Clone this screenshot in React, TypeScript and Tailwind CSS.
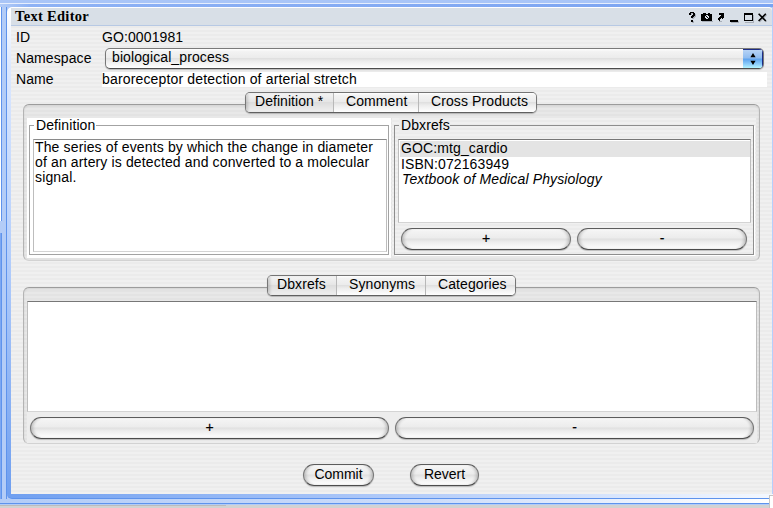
import React from "react";

const STRIPES =
  "bg-[repeating-linear-gradient(180deg,#f0f0f0_0px,#f0f0f0_2px,#ebebeb_2px,#ebebeb_4px)]";
const GLOSS =
  "bg-[linear-gradient(180deg,#ffffff_0%,#f3f3f3_12%,#ececec_45%,#e0e0e0_50%,#ededed_65%,#ffffff_100%)]";

function Pill({ label, className, textClass = "" }: { label: string; className: string; textClass?: string }) {
  return (
    <button
      className={`flex h-[22px] shrink-0 items-center justify-center rounded-full border border-t-[#5c5c5c] border-x-[#777] border-b-[#4c4c4c] shadow-[0_1px_1px_#00000038,inset_3px_0_3px_-1px_#00000030,inset_-3px_0_3px_-1px_#00000030] ${GLOSS} ${className}`}
    >
      <span className={`relative -top-px whitespace-nowrap ${textClass}`}>{label}</span>
    </button>
  );
}

function Tabs({ items, className }: { items: { label: string; className: string }[]; className: string }) {
  return (
    <div
      className={`relative z-10 flex h-[21px] overflow-hidden rounded-[5px] border border-t-[#747474] border-x-[#777] border-b-[#606060] shadow-[0_1px_1px_#00000038] ${className}`}
    >
      {items.map((t, i) => (
        <div
          key={t.label}
          className={`flex h-full shrink-0 items-center whitespace-nowrap ${
            i === 0
              ? "bg-[linear-gradient(180deg,#f4f4f4_0%,#e6e6e6_45%,#dddddd_50%,#f0f0f0_100%)] shadow-[inset_3px_0_3px_-1px_#00000028]"
              : `border-l border-[#b8b8b8] ${GLOSS}`
          } ${t.className}`}
        >
          <span className="relative -top-px">{t.label}</span>
        </div>
      ))}
    </div>
  );
}

function WindowIcons() {
  return (
    <svg width="80" height="12" viewBox="0 0 80 12" className="mt-[4px] shrink-0" shapeRendering="crispEdges" fill="#000">
      <g fill="#a9afb9" transform="translate(1 1)">
        <path d="M2 0h4v1h1v3H6v1H5v1H3V4h1V1H3v1H1V1h1zM3 8h2v2H3zM13 8h11v1H13zM30 8h3v1h-3zM42 8h8v2h-8zM56 9h9v1h-9zM64 2h1v7h-1z" />
      </g>
      <path d="M2 0h4v1h1v3H6v1H5v1H3V4h1V3h1V1H3v2H1V1h1zM3 8h2v2H3z" />
      <path d="M13 2h2V1h3v1h2V1h2v1h2v7H13z" />
      <path d="M17 4h1v-1h2v1h1v2h-1v1h-2V6h-1z" fill="#d8dfe7" />
      <path d="M18 4h1v1h-1zM19 5h1v1h-1z" />
      <path d="M31 1h5v5h-1v1h-1V6h-1v1h-1v2h-1V8h-1V6h1V5h1V4h1V3h-2z" />
      <path d="M42 8h8v2h-8z" />
      <path d="M56 1h9v8h-9zM57 3v5h7V3z" fillRule="evenodd" />
      <g shapeRendering="auto" fill="none" strokeWidth="1.6">
        <path d="M71.5 2.7l7 7m0-7l-7 7" stroke="#a9afb9" />
        <path d="M70.6 1.8l7.2 7.2m0-7.2l-7.2 7.2" stroke="#000" />
      </g>
    </svg>
  );
}

function Row({ label, children, className }: { label: string; children: React.ReactNode; className: string }) {
  return (
    <div className={`flex items-center ${className}`}>
      <div className="w-[86px] shrink-0 whitespace-nowrap tracking-[0.1px]">{label}</div>
      {children}
    </div>
  );
}

export default function App() {
  return (
    <div className="flex h-[508px] w-[773px] flex-col overflow-hidden bg-[#b3ccf7] font-['Liberation_Sans',Arial,sans-serif] text-[14px] leading-[15px] text-black">
      <div className="h-[3px] shrink-0 bg-[#a9c5f7]" />
      <div className="h-px shrink-0 bg-[#e6eefe]" />
      <div className="h-[3px] shrink-0 bg-[linear-gradient(90deg,#b3ccf7_0px,#8eb2f5_30px,#7aa3f1_100%)]" />

      <div className="flex h-[492px] shrink-0">
        {/* Edges of the neighbouring panes */}
        <div className="flex w-[7px] shrink-0 border-r border-[#5e93ec]">
          <div className="flex w-[2px] flex-col">
            <div className="h-[214px] border-r border-[#5e93ec] bg-white" />
            <div className="h-3 bg-[#b3ccf7]" />
            <div className="flex-1 border-r border-[#5e93ec] bg-[#7da8f2]" />
          </div>
          <div className="flex-1 bg-[#b3ccf7]" />
        </div>

        <div className="flex h-[492px] w-[766px] flex-col rounded-l-[5px] rounded-tr-[5px] border-b border-[#5e93ec] bg-[linear-gradient(90deg,#6f9ff0_0%,#a9c5f8_45%,#f4f8ff_100%)]">
          <div className="flex h-[487px] shrink-0 rounded-t-[5px] bg-[linear-gradient(180deg,#ffffff_0%,#dce8ff_12%,#b5cffc_50%,#6f9ff0_100%)] pl-1 pt-px">
            <div className={`flex w-[761px] flex-col ${STRIPES}`}>
              <header className="flex h-[18px] shrink-0 justify-between rounded-tr-[4px] border-b border-[#b7c9e4] bg-[#d8dfe7] pl-1 pr-[4px]">
                <span className="whitespace-nowrap font-['Liberation_Serif',serif] text-[14.5px] font-bold leading-[17px] tracking-[0.3px]">
                  Text Editor
                </span>
                <WindowIcons />
              </header>

              <Row label="ID" className="mt-[2px] h-[18px] shrink-0 pl-[5px]">
                <span className="tracking-[0.1px]">GO:0001981</span>
              </Row>
              <Row label="Namespace" className="mt-px h-[22px] shrink-0 pl-[5px]">
                <div
                  className={`ml-[3px] flex h-[21px] w-[659px] overflow-hidden rounded-[5px] border border-t-[#7a7a7a] border-x-[#777] border-b-[#4c4c4c] shadow-[0_1px_1px_#00000038] ${GLOSS}`}
                >
                  <span className="flex flex-1 items-center pb-[2px] pl-[6px] tracking-[0.1px]">biological_process</span>
                  <div className="flex w-[20px] items-center justify-center border-r border-t border-[#1c2c86] bg-[linear-gradient(180deg,#b7d3f5_0%,#8fbcf0_45%,#5da2ee_50%,#8fd0fb_80%,#b4f4ff_100%)]">
                    <svg width="6" height="14" viewBox="0 0 6 14">
                      <path d="M3 1l2.6 4.2H.4zM3 13l2.6-4.2H.4z" fill="#000" />
                    </svg>
                  </div>
                </div>
              </Row>
              <Row label="Name" className="mt-[3px] h-[15px] shrink-0 pl-[5px]">
                <div className="h-[15px] w-[665px] whitespace-nowrap bg-white tracking-[0.16px]">
                  baroreceptor detection of arterial stretch
                </div>
              </Row>

              {/* Definition panel */}
              <section className="ml-3 mt-[17px] flex h-[157px] w-[737px] shrink-0 flex-col rounded-[6px] border border-t-[#9c9c9c] border-x-[#b4b4b4] border-b-[#d2d2d2] bg-black/[0.03] shadow-[inset_0_1px_2px_#00000018]">
                <Tabs
                  className="-mt-[13px] ml-[221px] w-[292px]"
                  items={[
                    { label: "Definition *", className: "w-[87px] pl-[9px] tracking-[0.05px]" },
                    { label: "Comment", className: "w-[85px] pl-[12px] tracking-[0.1px]" },
                    { label: "Cross Products", className: "flex-1 pl-[12px] tracking-[0.1px]" },
                  ]}
                />
                <div className="ml-[3px] mt-[5px] flex h-[140px]">
                  <div className="h-[140px] w-[364px] bg-white pl-[2px] pt-[7px]">
                    <div className="h-[130px] w-[360px] border border-[#a3a3a3]">
                      <span className="-mt-[8px] ml-[4px] block w-[62px] bg-white pl-[2px] tracking-[0.1px]">Definition</span>
                      <div className="ml-[3px] mt-[6px] h-[113px] w-[354px] whitespace-nowrap border border-t-[#8a8a8a] border-x-[#bdbdbd] border-b-[#d4d4d4] bg-white pl-px tracking-[0.14px]">
                        The series of events by which the change in diameter
                        <br />
                        of an artery is detected and converted to a molecular
                        <br />
                        signal.
                      </div>
                    </div>
                  </div>
                  <div className={`ml-px h-[138px] w-[364px] pl-[2px] pt-[7px] ${STRIPES}`}>
                    <div className="h-[130px] w-[360px] border border-[#8e8e8e] shadow-[1px_1px_0_#fff]">
                      <span className="-mt-[8px] ml-[4px] block w-[51px] bg-[#ededed] pl-[2px] tracking-[0.1px]">Dbxrefs</span>
                      <div className="ml-[3px] mt-[6px] h-[84px] w-[353px] border border-t-[#777] border-x-[#bdbdbd] border-b-[#d4d4d4] bg-white pt-px">
                        <div className="ml-px h-4 bg-[#e4e4e4] pl-px tracking-[0.12px]">GOC:mtg_cardio</div>
                        <div className="pl-[2px] tracking-[0.1px]">ISBN:072163949</div>
                        <div className="pl-[3px] italic tracking-[0.14px]">Textbook of Medical Physiology</div>
                      </div>
                      <div className="ml-[6px] mt-[5px] flex gap-[6px]">
                        <Pill label="+" className="w-[170px]" textClass="[-webkit-text-stroke:0.2px_#000]" />
                        <Pill label="-" className="w-[170px]" textClass="[-webkit-text-stroke:0.2px_#000]" />
                      </div>
                    </div>
                  </div>
                </div>
              </section>

              {/* Dbxrefs panel */}
              <section className="ml-3 mt-[26px] flex h-[157px] w-[737px] shrink-0 flex-col rounded-[6px] border border-t-[#9c9c9c] border-x-[#b4b4b4] border-b-[#d2d2d2] bg-black/[0.03] shadow-[inset_0_1px_2px_#00000018]">
                <Tabs
                  className="-mt-[13px] ml-[243px] w-[249px]"
                  items={[
                    { label: "Dbxrefs", className: "w-[68px] pl-[9px] tracking-[0.1px]" },
                    { label: "Synonyms", className: "w-[89px] pl-[12px] tracking-[0.1px]" },
                    { label: "Categories", className: "flex-1 pl-[12px] tracking-[0.1px]" },
                  ]}
                />
                <div className="ml-[3px] mt-[5px] h-[111px] w-[730px] shrink-0 border border-t-[#777] border-x-[#bdbdbd] border-b-[#d4d4d4] bg-white" />
                <div className="ml-[3px] flex w-[730px] flex-1 gap-[6px] bg-[#ededed] pl-[3px] pt-[5px]">
                  <Pill label="+" className="w-[359px]" textClass="[-webkit-text-stroke:0.2px_#000]" />
                  <Pill label="-" className="w-[359px]" textClass="[-webkit-text-stroke:0.2px_#000]" />
                </div>
              </section>

              <footer className="ml-[292px] mt-[20px] flex gap-[36px]">
                <Pill label="Commit" className="w-[71px]" />
                <Pill label="Revert" className="w-[69px]" />
              </footer>
            </div>
            <div className="w-px bg-[#b5cffc]" />
          </div>
        </div>
      </div>

      <div className="h-1 shrink-0 bg-[linear-gradient(90deg,#b3ccf7_0%,#ccdcfa_55%,#ffffff_100%)]" />
      <div className="h-px shrink-0 bg-[#5e93ec]" />
      <div className="flex h-[4px] shrink-0 justify-between bg-[#d2d2d2]">
        <div className="w-[769px]">
          <div className="h-px bg-[#b3ccf7]" />
          <div className="h-px w-[226px] bg-[#bcbcbc]" />
        </div>
        {/* Corner of the resize grip */}
        <div className="-mt-[9px] h-[13px] w-1 border-l border-t border-[#c4c4c4] bg-white" />
      </div>
    </div>
  );
}
